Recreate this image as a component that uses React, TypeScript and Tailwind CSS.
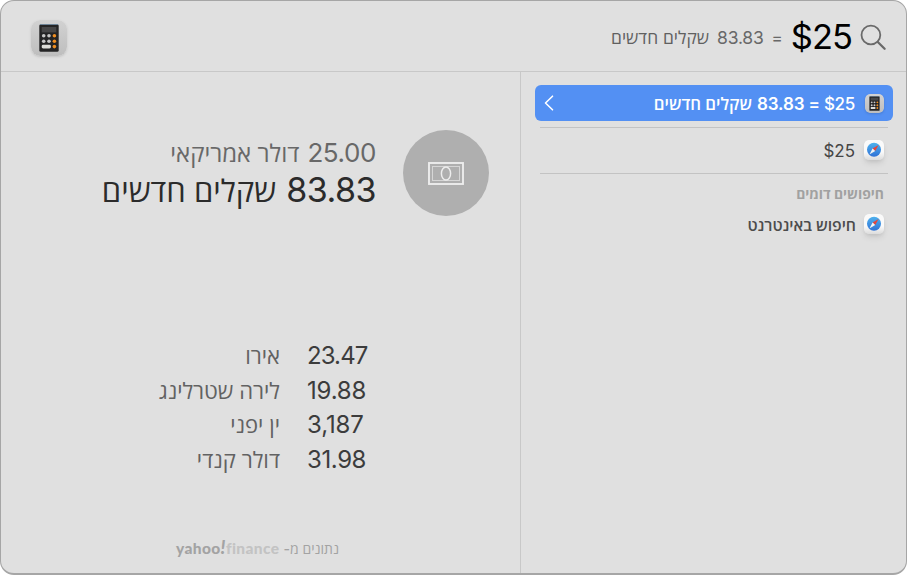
import * as React from 'react'

type IconProps = { className?: string }

const CalculatorIcon = ({ className }: IconProps) => (
    <svg viewBox="0 0 36 36" className={className}>
        <defs>
            <linearGradient id="calcBg" x1="0" y1="0" x2="0" y2="1">
                <stop offset="0" stopColor="#d2d2d2" />
                <stop offset="1" stopColor="#bebebe" />
            </linearGradient>
        </defs>
        <rect width="36" height="36" rx="9" fill="url(#calcBg)" />
        <rect x="8.3" y="4.2" width="19.4" height="27.6" rx="1.6" fill="#242425" />
        <rect x="9" y="4" width="18" height="1" fill="#6d8396" />
        <rect x="10.7" y="7" width="14.6" height="5.4" fill="#464647" />
        {[15.8, 21.2].map((y) => (
            <g key={y}>
                <circle cx="12.7" cy={y} r="1.8" fill="#c6c6c6" />
                <circle cx="18" cy={y} r="1.8" fill="#c6c6c6" />
                <circle cx="23.4" cy={y} r="1.8" fill="#ee8e22" />
            </g>
        ))}
        <rect x="10.7" y="24.8" width="9.2" height="3.6" rx="1.4" fill="#dcdcd8" />
        <circle cx="23.4" cy="26.6" r="1.8" fill="#ee8e22" />
    </svg>
)

const SafariIcon = ({ className }: IconProps) => (
    <svg viewBox="0 0 20 20" className={className}>
        <defs>
            <linearGradient id="safariDial" x1="0" y1="0" x2="0" y2="1">
                <stop offset="0" stopColor="#4fb2ee" />
                <stop offset="1" stopColor="#2f72d6" />
            </linearGradient>
            <linearGradient id="safariBg" x1="0" y1="0" x2="0" y2="1">
                <stop offset="0.6" stopColor="#fafafa" />
                <stop offset="1" stopColor="#dcdcdc" />
            </linearGradient>
        </defs>
        <rect width="20" height="20" rx="4.5" fill="url(#safariBg)" />
        <circle cx="10" cy="9.7" r="7" fill="url(#safariDial)" />
        <path d="M14.6 5 8.6 8.4l2.6 2.6z" fill="#e5463c" />
        <path d="M5.4 14.4 8.6 8.4l2.6 2.6z" fill="#f3f3f3" />
    </svg>
)

const SearchIcon = ({ className }: IconProps) => (
    <svg viewBox="0 0 26 27" className={className} fill="none" stroke="#6a6a6a">
        <circle cx="10.9" cy="11" r="9.4" strokeWidth="1.8" />
        <path d="M17.8 18 24.6 24.7" strokeWidth="2.3" strokeLinecap="round" />
    </svg>
)

const BanknoteIcon = ({ className }: IconProps) => (
    <svg viewBox="0 0 36 23" className={className} fill="none" stroke="#ededed">
        <rect x="1" y="1" width="34" height="21" strokeWidth="1.9" />
        <rect x="4.5" y="4.5" width="27" height="14" stroke="#d6d6d6" strokeWidth="1" />
        <ellipse cx="18" cy="11.5" rx="4.6" ry="6.6" fill="#afafaf" strokeWidth="1.5" />
    </svg>
)

const rates = [
    { value: '23.47', name: 'אירו', tracking: 'tracking-[-0.9px]' },
    { value: '19.88', name: 'לירה שטרלינג', tracking: 'tracking-[-0.2px]' },
    { value: '3,187', name: 'ין יפני', tracking: 'tracking-[-0.1px]' },
    { value: '31.98', name: 'דולר קנדי', tracking: 'tracking-[-0.4px]' },
]

const Header = () => (
    <header className="flex h-[71px] items-center border-b border-[#c8c8c8] ps-5 pt-[3px] pe-[38px]">
        <SearchIcon className="h-[27px] w-[26px] shrink-0" />
        <span dir="ltr" className="mr-[8px] text-[34.5px] leading-none tracking-[-1px] text-black">
            $25
        </span>
        <span className="ms-[8px] pt-px text-[17px] leading-none text-[#686868]">=</span>
        <span className="ms-[8px] pt-px text-[17.5px] leading-none tracking-[-0.2px] text-[#686868]">83.83</span>
        <span className="ms-[8px] pt-px text-[17.4px] leading-none text-[#606060]">שקלים חדשים</span>
        <CalculatorIcon className="ms-auto -me-[8px] size-9 rounded-[9px] shadow-sm" />
    </header>
)

const Results = () => (
    <aside className="w-[386px] shrink-0 border-e border-[#c8c8c8] ps-[13px] pe-[14px] pt-[13px]">
        <div className="flex h-9 items-center rounded-md bg-[#5390f3] px-[9px] text-[17px] font-medium leading-none text-white">
            <CalculatorIcon className="size-[19px] rounded-[5px] shadow-sm" />
            <span dir="ltr" className="mr-[10px] pt-0.5 tracking-[-0.3px]">$25</span>
            <span className="ms-[4px] pt-0.5 font-semibold">=</span>
            <span className="ms-[4px] pt-0.5 font-semibold tracking-[-0.1px]">83.83</span>
            <span className="ms-[5px] pt-0.5 text-[16.8px] font-semibold">שקלים חדשים</span>
            <svg viewBox="0 0 10 16" className="ms-auto h-4 w-[10px]" fill="none" stroke="white">
                <path d="M8.5 1.2 1.5 8l7 6.8" strokeWidth="1.6" strokeLinecap="round" strokeLinejoin="round" />
            </svg>
        </div>
        <div className="mx-[5px] mt-[6px] flex h-[47px] items-center border-y border-[#c3c3c3] ps-[4px] text-[17px] leading-none text-[#454545]">
            <SafariIcon className="mb-0.5 size-5 rounded-[5px] shadow-md" />
            <span dir="ltr" className="mr-[9px] pt-0.5">$25</span>
        </div>
        <h2 className="mt-[14px] ps-[9px] text-[13.9px] leading-none font-bold text-[#a1a1a1]">חיפושים דומים</h2>
        <div className="mt-[12px] flex h-5 items-center ps-[9px] text-[15.8px] leading-none font-semibold text-[#4c4c4c]">
            <SafariIcon className="size-5 rounded-[5px] shadow-md" />
            <span className="ms-[8px] pt-1">חיפוש באינטרנט</span>
        </div>
    </aside>
)

const Preview = () => (
    <main className="flex grow flex-col ps-[31px] pt-[58px]">
        <section className="flex">
            <div className="flex size-[86px] items-center justify-center rounded-full bg-[#afafaf]">
                <BanknoteIcon className="h-[23px] w-9" />
            </div>
            <div className="ms-[27px] pt-[10px]">
                <div className="flex h-[28px] items-baseline text-[26px] leading-none text-[#686868]">
                    <span className="tracking-[-0.4px]">25.00</span>
                    <span className="ms-[8px] text-[24px] font-medium">דולר אמריקאי</span>
                </div>
                <div className="mt-[5px] flex h-[36px] items-baseline text-[34px] leading-none text-[#2b2b2b]">
                    <span className="tracking-[-0.5px]">83.83</span>
                    <span className="ms-[10px] text-[31px] font-medium">שקלים חדשים</span>
                </div>
            </div>
        </section>
        <ul className="mt-[123px] ps-[121px] text-2xl leading-none">
            {rates.map((rate) => (
                <li key={rate.name} className="flex h-[34.7px] items-baseline pt-[5px]">
                    <span dir="ltr" className={`w-[61px] text-[#3c3c3c] ${rate.tracking}`}>
                        {rate.value}
                    </span>
                    <span className="ms-[27px] text-[22px] font-medium text-[#626262]">{rate.name}</span>
                </li>
            ))}
        </ul>
        <footer className="mt-auto mb-[15px] flex h-5 items-center ps-[150px] text-[14px] leading-none text-[#a3a3a3]">
            <span className="pt-px font-medium">נתונים מ-</span>
            <span dir="ltr" className="mr-[4px] pb-0.5 font-['Lato'] text-[15.5px] font-black tracking-[0.4px]">
                yahoo<i className="text-[18px]">!</i><span className="text-[#c3c3c3]">finance</span>
            </span>
        </footer>
    </main>
)

const App = () => {
    return (
        <div className="h-[577px] w-[910px] overflow-hidden bg-white font-['Inter','Open_Sans','Liberation_Sans',sans-serif]">
            <div
                dir="rtl"
                className="flex h-[575px] w-[907px] flex-col overflow-hidden rounded-[14px] border border-[#a6a6a6] border-b-2 bg-[#e0e0e0]"
            >
                <Header />
                <div className="flex grow">
                    <Results />
                    <Preview />
                </div>
            </div>
        </div>
    )
}

export default App
